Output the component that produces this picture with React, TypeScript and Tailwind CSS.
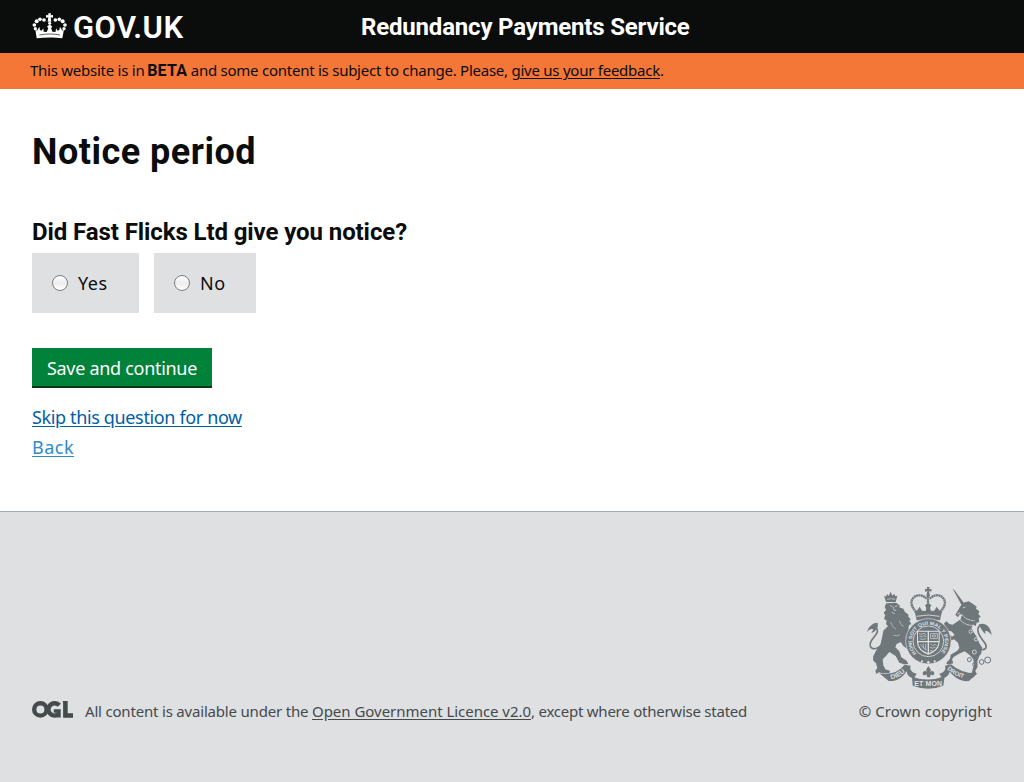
import type { ReactNode } from "react";

function Crown() {
  return (
    <svg className="block h-[26px] w-[36px]" viewBox="36 38 108 78" fill="#fff" aria-hidden="true">
      <path d="M85 39h8l-1 6 7-1v8l-7-1 2 13h-11l2-13-7 1v-8l7 1z" />
      <circle cx="72" cy="59" r="5.5" />
      <circle cx="60" cy="57" r="5.5" />
      <circle cx="50" cy="63" r="6" />
      <circle cx="43" cy="74" r="5.5" />
      <circle cx="46" cy="85" r="5" />
      <circle cx="106" cy="59" r="5.5" />
      <circle cx="118" cy="57" r="5.5" />
      <circle cx="128" cy="63" r="6" />
      <circle cx="135" cy="74" r="5.5" />
      <circle cx="132" cy="85" r="5" />
      <circle cx="89" cy="69" r="4.5" />
      <path d="M46 87l5 4 7-12 2 10 5 2 5-7 1 10 9 1 5-11-4-5 8-7 8 7-4 5 5 11 9-1 1-10 5 7 5-2 2-10 7 12 5-4-5 27c-23-3-53-3-77 0z" />
      <path d="M58 104c19-4 44-4 62 0" fill="none" stroke="#0b0c0c" strokeWidth="2" />
    </svg>
  );
}

function OglLogo() {
  return (
    <svg className="block h-[17px] w-[41px] shrink-0" viewBox="0 0 41 17" aria-hidden="true">
      <g fill="none" stroke="#454a4c" strokeWidth="4.4">
        <circle cx="8.4" cy="8.4" r="6.2" />
        <path d="M27.3 4.3A6.2 6.2 0 1 0 26.8 13" />
        <path d="M21.8 10h5.2V16.6" strokeWidth="3.4" />
        <path d="M31.8 2.2L33.4 1v13.5H41" strokeWidth="4.6" />
      </g>
    </svg>
  );
}

function Arms() {
  return (
    <svg className="block h-[102px] w-[125px]" viewBox="15 15 375 306" fill="#6f777b" aria-hidden="true">
      <defs>
        <path id="garter" d="M164 214A50 50 0 1 1 234 214" />
        <path id="left-scroll" d="M88 292Q116 286 138 262" />
        <path id="right-scroll" d="M255 262Q278 283 314 291" />
      </defs>

      {/* Lion */}
      <path d="M72 60l-6-19 6 3 3-8 5 6 6-13 5 12 6-6 3 8 6-2-5 19z" />
      <path d="M75 52q12-4 25 0" stroke="#dee0e2" strokeWidth="2" fill="none" />
      <path d="M73 64L102 62L113 70L112 76L124 80L129 90L140 98L138 103L146 112L142 116L148 126L141 130L139 140L146 150L142 160L131 164L134 178L148 186L147 196L136 201L124 192L116 180L104 186L100 196L112 208L118 226L134 236L139 246L126 247L112 242L101 222L82 210L72 222L62 232L64 250L70 262L84 266L82 273L62 274L50 271L43 276L40 266L46 258L42 244L34 236L33 224L42 206L55 188L60 168L64 146L78 132L72 126L74 116L66 110L70 100L65 92L72 84L68 74z" />
      <path d="M60 188C34 212 18 196 27 178C34 163 52 156 44 138C42 131 38 130 34 131" fill="none" stroke="#6f777b" strokeWidth="5" />
      <path d="M47 122C34 122 20 132 15 150C22 142 28 140 34 142L28 154C40 148 50 138 47 122z" />
      <path d="M84 71l8 3m6 0l8-3m-12 4l2 10 7 0m-14 6l9 4" stroke="#dee0e2" strokeWidth="2" fill="none" />
      <path d="M86 120q4 16 16 22m10-26q4 14 14 18m-32 26q12 4 20-2" stroke="#dee0e2" strokeWidth="1.5" fill="none" />

      {/* Unicorn */}
      <path d="M272 20L277 24L308 66L299 70z" />
      <path d="M304 62L320 58L330 64L344 74L342 80L352 88L349 96L356 104L350 109L352 120L344 122L341 132L334 128L328 138L336 152L345 166L352 184L360 196L358 214L352 222L346 238L347 254L340 266L344 276L332 288L320 283L330 270L336 246L334 232L322 218L308 208L294 214L276 224L270 232L274 244L258 248L252 244L264 230L266 218L286 206L292 198L288 182L276 172L262 178L254 172L248 158L254 152L264 158L270 164L278 158L268 148L254 146L250 136L246 124L254 118L262 126L272 128L284 120L296 112L300 96L292 98L288 106L280 98L290 82L294 74z" />
      <path d="M345 196C366 210 380 200 368 182C352 162 338 142 356 128" fill="none" stroke="#6f777b" strokeWidth="5" />
      <path d="M350 128C368 120 386 132 389 160C382 150 376 146 370 146L370 156C362 150 358 140 350 128z" />
      <path d="M290 108q18 24 46 22m-36-32q14 18 38 18" fill="none" stroke="#dee0e2" strokeWidth="3" strokeDasharray="6 2" />
      <path d="M303 78l7-3m-24 21l8-4" stroke="#dee0e2" strokeWidth="2.5" />
      <g fill="none" stroke="#6f777b" strokeWidth="3">
        <circle cx="322" cy="233" r="6" />
        <circle cx="337" cy="247" r="5" />
        <circle cx="359" cy="240" r="7" />
        <circle cx="377" cy="234" r="9" />
      </g>
      <g fill="none" stroke="#dee0e2" strokeWidth="2.5">
        <circle cx="326" cy="149" r="5" />
        <circle cx="342" cy="172" r="5" />
        <circle cx="337" cy="210" r="6" />
      </g>

      {/* Royal crown */}
      <path d="M194 15h9l-2 7 7-2v9l-7-2 3 16h-11l3-16-7 2v-9l7 2z" />
      <g fill="none" stroke="#6f777b" strokeWidth="7" strokeDasharray="6 1.2">
        <path d="M194 50C172 29 144 44 149 68C152 79 159 84 163 93" />
        <path d="M203 50C225 29 253 44 248 68C245 79 238 84 234 93" />
        <path d="M198 42v43" />
      </g>
      <path d="M158 88c7 0 10-7 15-14l7 12 11 1 2-10-4-7 10-7 9 7-4 7 3 10 10-1 7-12c5 7 9 14 16 14l-6 27H164z" />
      <path d="M164 103q35-8 69 0" fill="none" stroke="#dee0e2" strokeWidth="2.5" />

      {/* Garter and shield */}
      <circle cx="199" cy="178" r="68" stroke="#dee0e2" strokeWidth="2" />
      <circle cx="199" cy="178" r="46" stroke="#dee0e2" strokeWidth="2.5" />
      <text fill="#dee0e2" fontFamily="Liberation Sans, sans-serif" fontWeight="700" fontSize="15">
        <textPath href="#garter" textLength="232" lengthAdjust="spacingAndGlyphs">HONI SOIT QUI MAL Y PENSE</textPath>
      </text>
      <path d="M165 146h68v36q-3 25-34 36-31-11-34-36z" fill="#dee0e2" />
      <path d="M168 149h29v28h-29zm33 0h29v28h-29zm-33 32h29v32q-26-9-29-32zm33 0h29q-3 23-29 32z" />
      <path
        d="M171 154l8 4 4-4 9 3m-20 5l9 3 4-4 9 3m-21 6l8 2 12-2m13-15h20v15h-20zm4 7l6-4 6 4-6 4zM175 187l17 18m-9-20l2 14m6-14v20m15-18l8 4 4-4 6 3m-20 6l9 3 4-4 4 3m-17 7l8 2"
        fill="none"
        stroke="#dee0e2"
        strokeWidth="2"
      />
      <path d="M180 234l4 4-4 4-4-4zm19 2l5 5-5 5-5-5zm19-2l4 4-4 4-4-4z" fill="#dee0e2" />

      {/* Motto scroll */}
      <path d="M52 274Q100 282 128 248l18 3c-5 13 6 21 18 24l-9 15c-14-4-20-12-21-22-16 24-34 31-54 29z" />
      <path d="M346 274Q300 276 267 247l-18 4c4 13-5 21-17 24l9 15c13-4 20-11 22-20 18 19 36 30 58 27z" />
      <path d="M150 284q48 18 98-1l-4 28q-45 18-92 0z" />
      <path d="M199 252l8 12-4 8c4-7 12-7 14 1 0 8-8 9-10 3l-3 10h-8l-3-10c-3 6-11 5-11-3 2-8 11-8 14-1l-4-8z" />
      <g fill="#dee0e2" fontFamily="Liberation Sans, sans-serif" fontWeight="700" fontSize="20">
        <text><textPath href="#left-scroll">DIEU</textPath></text>
        <text fontSize="18"><textPath href="#right-scroll">DROIT</textPath></text>
        <text x="157" y="312" fontSize="21" textLength="83">ET MON</text>
      </g>
    </svg>
  );
}

function Choice({ children, className }: { children: ReactNode; className: string }) {
  return (
    <label className={`flex h-[60px] items-center bg-[#dee0e2] pl-5 text-[18px] leading-[30px] ${className}`}>
      <input
        type="radio"
        name="notice"
        className="mr-[10px] size-4 appearance-none rounded-full border border-[#7e7e7e] bg-linear-to-b from-white via-[#ededed] to-white"
      />
      {children}
    </label>
  );
}

export default function App() {
  return (
    <div className="flex min-h-[782px] flex-col bg-white font-['Noto_Sans',sans-serif] text-[#0b0c0c]">
      <header className="flex h-[53px] items-start bg-[#0b0c0c] pl-8 font-['Roboto',sans-serif] font-bold text-white">
        <a href="#" className="flex w-[329px] items-start">
          <span className="pt-[13px]">
            <Crown />
          </span>
          <span className="ml-[5px] pt-[13px] text-[31px] leading-[30px] font-semibold tracking-[0.45px]">GOV.UK</span>
        </a>
        <span className="pt-3 text-[24px] leading-[30px] tracking-[-0.18px]">Redundancy Payments Service</span>
      </header>

      <div className="h-9 bg-[#f47738] pl-[30px] text-[15px] leading-[34px] tracking-[-0.25px]">
        This website is in{" "}
        <strong className="-ml-px font-['Roboto',sans-serif] text-[16px] tracking-[0.2px]">BETA</strong> and some content
        is subject to change. Please,{" "}
        <a href="#" className="underline underline-offset-2">give us your feedback</a>.
      </div>

      <main className="h-[422px] px-8 pt-[43px]">
        <h1 className="font-['Roboto',sans-serif] text-[36px] leading-[40px] font-bold tracking-[0.5px]">Notice period</h1>
        <h2 className="mt-[45px] font-['Roboto',sans-serif] text-[24px] leading-[30px] font-bold tracking-[-0.09px]">
          Did Fast Flicks Ltd give you notice?
        </h2>
        <div className="mt-[6px] flex gap-[15px]">
          <Choice className="w-[107px] tracking-[0.5px]">Yes</Choice>
          <Choice className="w-[102px] tracking-[0.5px]">No</Choice>
        </div>
        <button className="mt-[35px] block h-10 w-[180px] border-b-2 border-[#003618] bg-[#00823b] pt-[2px] text-[18px] leading-[30px] tracking-[-0.3px] text-white">
          Save and continue
        </button>
        <div className="mt-[14px] flex flex-col items-start text-[18px] leading-[30px] tracking-[-0.36px]">
          <a href="#" className="text-[#005ea5] underline underline-offset-2">Skip this question for now</a>
          <a href="#" className="tracking-[0.5px] text-[#2e8aca] underline underline-offset-2">Back</a>
        </div>
      </main>

      <footer className="flex flex-1 items-start justify-between border-t border-[#a1acb2] bg-[#dee0e2] px-8 text-[15px] leading-5 text-[#454a4c]">
        <div className="flex pt-[189px]">
          <OglLogo />
          <p className="ml-3 tracking-[-0.19px]">
            All content is available under the{" "}
            <a href="#" className="tracking-[-0.03px] underline underline-offset-2">Open Government Licence v2.0</a>
            <span className="tracking-[-0.24px]">, except where otherwise stated</span>
          </p>
        </div>
        <div className="flex flex-col items-end pt-[75px]">
          <Arms />
          <a href="#" className="mt-3 tracking-[0.05px]">© Crown copyright</a>
        </div>
      </footer>
    </div>
  );
}
